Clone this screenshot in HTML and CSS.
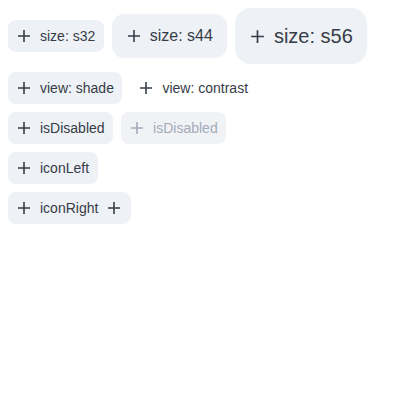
FILE: index.html
```html
<!DOCTYPE html>
<html>
<head>
<meta charset="utf-8">
<link rel="stylesheet" href="styles.css">
</head>
<body>
<div class="stack">
  <div class="row">
    <button class="btn s32"><svg class="ico" viewBox="0 0 16 16"><path d="M8 2v12M2 8h12"/></svg><span>size: s32</span></button>
    <button class="btn s44"><svg class="ico" viewBox="0 0 16 16"><path d="M8 2v12M2 8h12"/></svg><span>size: s44</span></button>
    <button class="btn s56"><svg class="ico big" viewBox="0 0 16 16"><path d="M8 2v12M2 8h12"/></svg><span>size: s56</span></button>
  </div>
  <div class="row">
    <button class="btn s32"><svg class="ico" viewBox="0 0 16 16"><path d="M8 2v12M2 8h12"/></svg><span>view: shade</span></button>
    <button class="btn s32 contrast"><svg class="ico" viewBox="0 0 16 16"><path d="M8 2v12M2 8h12"/></svg><span>view: contrast</span></button>
  </div>
  <div class="row">
    <button class="btn s32"><svg class="ico" viewBox="0 0 16 16"><path d="M8 2v12M2 8h12"/></svg><span>isDisabled</span></button>
    <button class="btn s32 disabled"><svg class="ico" viewBox="0 0 16 16"><path d="M8 2v12M2 8h12"/></svg><span>isDisabled</span></button>
  </div>
  <div class="row">
    <button class="btn s32"><svg class="ico" viewBox="0 0 16 16"><path d="M8 2v12M2 8h12"/></svg><span>iconLeft</span></button>
  </div>
  <div class="row">
    <button class="btn s32"><svg class="ico" viewBox="0 0 16 16"><path d="M8 2v12M2 8h12"/></svg><span>iconRight</span><svg class="ico" viewBox="0 0 16 16"><path d="M8 2v12M2 8h12"/></svg></button>
  </div>
</div>
</body>
</html>
```
FILE: styles.css
```css
html, body {
  background: #ffffff;
}
body {
  margin: 8px;
  font-family: "Liberation Sans", Arial, sans-serif;
}
.stack {
  display: flex;
  flex-direction: column;
  gap: 8px;
}
.row {
  display: flex;
  align-items: center;
  gap: 8px;
}
.btn {
  display: inline-flex;
  align-items: center;
  gap: 8px;
  border: none;
  margin: 0;
  background: #eef1f5;
  color: #363c48;
  font-family: "Liberation Sans", Arial, sans-serif;
  cursor: pointer;
}
.ico {
  width: 16px;
  height: 16px;
  flex: none;
  fill: none;
  stroke: currentColor;
  stroke-width: 1.6;
}
.ico.big {
  width: 17px;
  height: 17px;
}
.s32 {
  height: 32px;
  padding: 0 8.5px 0 8px;
  font-size: 14px;
  border-radius: 8px;
}
.s44 {
  height: 44px;
  padding: 0 14px;
  font-size: 16px;
  border-radius: 12px;
}
.s56 {
  height: 56px;
  padding: 0 14px;
  font-size: 20px;
  border-radius: 16px;
}
.contrast {
  background: transparent;
}
.disabled {
  background: #f0f2f6;
  color: #a3abb9;
}
```
